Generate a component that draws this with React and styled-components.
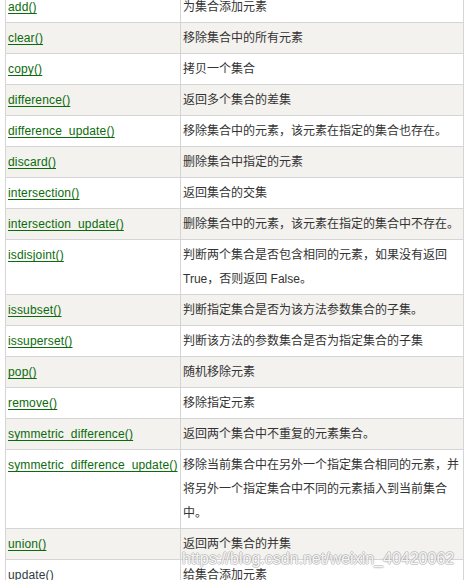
import React from "react";
import styled, { createGlobalStyle } from "styled-components";

const Global = createGlobalStyle`
  html, body { margin: 0; padding: 0; background: #ffffff; overflow: hidden; }
  body { font-family: "Liberation Sans", "Noto Sans CJK SC", sans-serif; }
`;

const Page = styled.div`
  position: relative;
  width: 464px;
  height: 580px;
  overflow: hidden;
  padding-left: 5px;
  box-sizing: border-box;
`;

const Table = styled.table`
  margin-top: -9px;
  border-collapse: collapse;
  table-layout: fixed;
  width: 458px;
  font-size: 12px;
  line-height: 24px;
  color: #333333;
`;

const Row = styled.tr`
  background: ${(p) => (p.$alt ? "#f3f2ef" : "#ffffff")};
`;

const Cell = styled.td`
  border: 1px solid #d5d5d5;
  padding: 3px 2px;
  vertical-align: top;
  white-space: nowrap;
  overflow: hidden;
`;

const Link = styled.a`
  color: ${(p) => (p.$muted ? "#2f3b44" : "#0b6b0b")};
  letter-spacing: 0.15px;
  text-decoration: underline;
  text-underline-offset: 2px;
  cursor: pointer;
`;

const Watermark = styled.div`
  position: absolute;
  left: 182px;
  top: 549px;
  font-family: "Liberation Sans", sans-serif;
  font-size: 16px;
  line-height: 20px;
  color: rgba(255, 255, 255, 0.9);
  text-shadow:
    1px 0 0 rgba(150, 150, 150, 0.45),
    -1px 0 0 rgba(150, 150, 150, 0.45),
    0 1px 0 rgba(150, 150, 150, 0.45),
    0 -1px 0 rgba(150, 150, 150, 0.45);
  white-space: nowrap;
  pointer-events: none;
`;

const rows = [
  ["add()", ["为集合添加元素"]],
  ["clear()", ["移除集合中的所有元素"]],
  ["copy()", ["拷贝一个集合"]],
  ["difference()", ["返回多个集合的差集"]],
  ["difference_update()", ["移除集合中的元素，该元素在指定的集合也存在。"]],
  ["discard()", ["删除集合中指定的元素"]],
  ["intersection()", ["返回集合的交集"]],
  ["intersection_update()", ["删除集合中的元素，该元素在指定的集合中不存在。"]],
  ["isdisjoint()", ["判断两个集合是否包含相同的元素，如果没有返回", "True，否则返回 False。"]],
  ["issubset()", ["判断指定集合是否为该方法参数集合的子集。"]],
  ["issuperset()", ["判断该方法的参数集合是否为指定集合的子集"]],
  ["pop()", ["随机移除元素"]],
  ["remove()", ["移除指定元素"]],
  ["symmetric_difference()", ["返回两个集合中不重复的元素集合。"]],
  [
    "symmetric_difference_update()",
    ["移除当前集合中在另外一个指定集合相同的元素，并", "将另外一个指定集合中不同的元素插入到当前集合", "中。"],
  ],
  ["union()", ["返回两个集合的并集"]],
  ["update()", ["给集合添加元素"]],
];

export default function App() {
  return (
    <Page>
      <Global />
      <Table>
        <colgroup>
          <col style={{ width: "175px" }} />
          <col style={{ width: "283px" }} />
        </colgroup>
        <tbody>
          {rows.map(([name, lines], i) => (
            <Row key={name} $alt={i % 2 === 1}>
              <Cell>
                <Link $muted={i === rows.length - 1}>{name}</Link>
              </Cell>
              <Cell>
                {lines.map((l, j) => (
                  <React.Fragment key={j}>
                    {j > 0 && <br />}
                    {l}
                  </React.Fragment>
                ))}
              </Cell>
            </Row>
          ))}
        </tbody>
      </Table>
      <Watermark>https://blog.csdn.net/weixin_40420062</Watermark>
    </Page>
  );
}
